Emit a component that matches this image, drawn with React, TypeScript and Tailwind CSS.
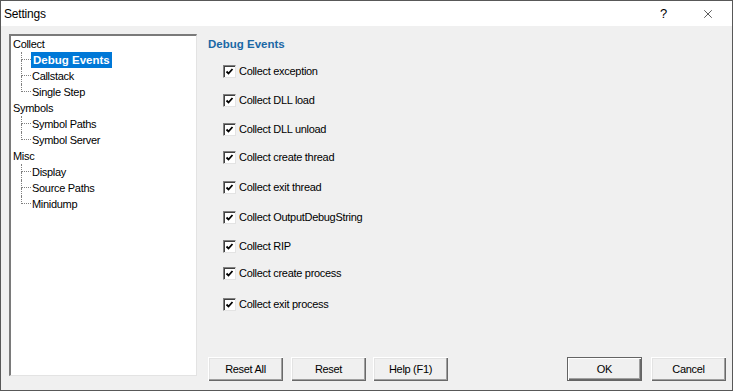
import { X } from 'lucide-react';

type Node = { label: string; children: string[] };

const tree: Node[] = [
  { label: 'Collect', children: ['Debug Events', 'Callstack', 'Single Step'] },
  { label: 'Symbols', children: ['Symbol Paths', 'Symbol Server'] },
  { label: 'Misc', children: ['Display', 'Source Paths', 'Minidump'] },
];

// spacing in the reference is a little uneven, so every row keeps its own top margin
const options = [
  { label: 'Collect exception', gap: 'mt-[11px]' },
  { label: 'Collect DLL load', gap: 'mt-[13px]' },
  { label: 'Collect DLL unload', gap: 'mt-[13px]' },
  { label: 'Collect create thread', gap: 'mt-[12px]' },
  { label: 'Collect exit thread', gap: 'mt-[14px]' },
  { label: 'Collect OutputDebugString', gap: 'mt-[14px]' },
  { label: 'Collect RIP', gap: 'mt-[13px]' },
  { label: 'Collect create process', gap: 'mt-[11px]' },
  { label: 'Collect exit process', gap: 'mt-[15px]' },
];

function Checkbox() {
  return (
    <span className="w-[13px] h-[13px] shrink-0 bg-white border-t border-l border-t-[#808080] border-l-[#808080] border-r border-b border-r-[#e3e3e3] border-b-[#e3e3e3] shadow-[inset_1px_1px_0_#404040] flex items-center justify-center">
      <svg width="9" height="9" viewBox="0 0 9 9">
        <path d="M1.5 4.5 L3.5 6.5 L7.5 2" fill="none" stroke="#000" strokeWidth="1.8" />
      </svg>
    </span>
  );
}

function TreeChild({ label, last, selected }: { label: string; last: boolean; selected: boolean }) {
  return (
    <div className="flex h-[16px] items-stretch">
      <div className="ml-[9px] w-[10px] flex flex-col">
        <div className="h-[8px] border-l border-b border-dotted border-[#808080]" />
        <div className={last ? 'h-[8px]' : 'h-[8px] border-l border-dotted border-[#808080]'} />
      </div>
      <span
        className={
          selected
            ? 'px-[2px] leading-[16px] bg-[#0078d7] text-white font-bold text-[11.5px] tracking-normal'
            : 'pl-[1px] leading-[16px] text-black'
        }
      >
        {label}
      </span>
    </div>
  );
}

function Button({ label, primary, className }: { label: string; primary?: boolean; className?: string }) {
  return (
    <button
      type="button"
      className={`w-[75px] h-[24px] bg-[#f0f0f0] text-[11px] text-black ${
        primary
          ? 'border border-[#646464] shadow-[inset_1px_1px_0_#ffffff,inset_-1px_-1px_0_#696969,inset_-2px_-2px_0_#a0a0a0]'
          : 'shadow-[inset_1px_1px_0_#ffffff,inset_-1px_-1px_0_#696969,inset_-2px_-2px_0_#a0a0a0,inset_2px_2px_0_#e3e3e3]'
      } ${className ?? ''}`}
    >
      {label}
    </button>
  );
}

function App() {
  return (
    <div
      className="w-[733px] h-[391px] border border-[#585858] flex flex-col bg-[#f0f0f0] text-[11px] tracking-[-0.3px] text-black overflow-hidden"
      style={{ fontFamily: '"Liberation Sans", Arial, sans-serif' }}
    >
      <div className="h-[25px] bg-white flex items-center shrink-0">
        <span className="ml-[3px] text-[12px] tracking-[-0.2px]">Settings</span>
        <span className="ml-auto text-[13px] mr-[34px]">?</span>
        <X size={14} strokeWidth={1.1} className="mr-[17px] text-black" />
      </div>

      <div className="flex flex-1">
        <div className="ml-[8px] mt-[8px] w-[188px] h-[342px] bg-white border-t-2 border-l-2 border-t-[#7a7a7a] border-l-[#7a7a7a] border-r border-b border-r-[#e3e3e3] border-b-[#e3e3e3] pl-[1px]">
          {tree.map((node) => (
            <div key={node.label}>
              <div className="h-[16px] leading-[16px] pl-[1px]">{node.label}</div>
              {node.children.map((child, i) => (
                <TreeChild
                  key={child}
                  label={child}
                  last={i === node.children.length - 1}
                  selected={child === 'Debug Events'}
                />
              ))}
            </div>
          ))}
        </div>

        <div className="ml-[11px] mr-[6px] flex-1 flex flex-col">
          <div className="mt-[10px] h-[16px] leading-[16px] font-bold text-[11.5px] tracking-normal text-[#1a68a6]">
            Debug Events
          </div>
          {options.map((o) => (
            <div key={o.label} className={`${o.gap} ml-[15px] h-[16px] flex items-center gap-[3px]`}>
              <Checkbox />
              <span className="leading-[16px]">{o.label}</span>
            </div>
          ))}

          <div className="mt-auto mb-[9px] flex">
            <Button label="Reset All" />
            <Button label="Reset" className="ml-[8px]" />
            <Button label="Help (F1)" className="ml-[7px]" />
            <Button label="OK" primary className="ml-auto" />
            <Button label="Cancel" className="ml-[9px]" />
          </div>
        </div>
      </div>
    </div>
  );
}

export default App;
